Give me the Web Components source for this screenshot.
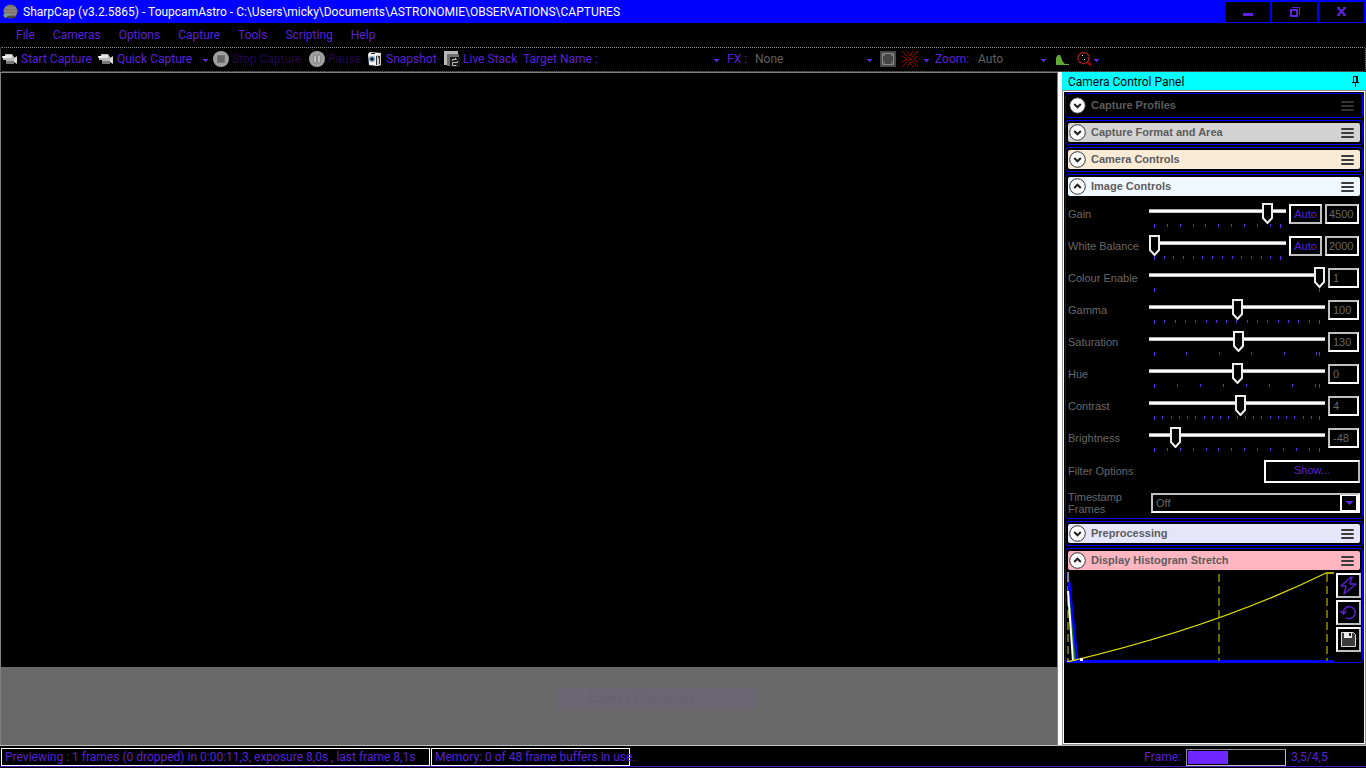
<!DOCTYPE html>
<html lang="en">
<head>
<meta charset="utf-8">
<title>SharpCap</title>
<style>
html, body { margin: 0; background: #000; }
body { font: 12px/16px Roboto, "Open Sans", sans-serif; color: #5a20d8; }
</style>
</head>
<body>
<cap-app></cap-app>
<script>
const TICK = '#6528f0';
function define(name, html, init) {
  const tpl = document.createElement('template');
  tpl.innerHTML = html;
  customElements.define(name, class extends HTMLElement {
    connectedCallback() {
      if (this.shadowRoot) return;
      this.attachShadow({ mode: 'open' }).append(tpl.content.cloneNode(true));
      if (init) init(this, this.shadowRoot);
    }
  });
}

/* Icons by name: width, height, shapes */
const ICONS = {
  camcorder: [16, 16, '<path d="M0 5h3V3h7l2 3v6H4V9H1V7H0z" fill="#b9b9b9"/><path d="M4 4h6v3H4z" fill="#e6e6e6"/><path d="M4 10h8v3H4z" fill="#777"/><path d="M12 7l3-2v8l-3-2z" fill="#d8d8d8"/><path d="M1 5h3v2H1z" fill="#fff"/>'],
  stop: [16, 16, '<circle cx="8" cy="8" r="8" fill="#a0a0a0"/><rect x="4" y="4" width="8" height="8" fill="#777"/><rect x="5" y="5" width="6" height="6" fill="#686868"/>'],
  pause: [16, 16, '<circle cx="8" cy="8" r="8" fill="#a0a0a0"/><path d="M5 4h2v8H5zM9 4h2v8H9z" fill="#f0f0f0" stroke="#666" stroke-width=".7"/>'],
  photo: [16, 16, '<path d="M1 3l2-2 11 1v12l-4 1-8-1z" fill="#f2f2f2"/><path d="M9 4l5-1v11l-5 1z" fill="#cfcfcf"/><path d="M9 5h1v9H9zM11 5h2v8h-1V7h-1z" fill="#333"/><circle cx="5" cy="8" r="3" fill="#6f9dc8"/><circle cx="5" cy="8" r="1.600" fill="#111"/><path d="M4 2h4v1H4z" fill="#222"/>'],
  stack: [16, 16, '<path d="M0 0h14v3H3v11H0z" fill="#b8b8b8"/><path d="M3 3h12v3H6v9H3z" fill="#6e6e6e"/><path d="M6 6h10v10H6z" fill="#1c1c1c"/><path d="M8.500 10V8.500h4l-1.500-1.500M13.500 10v1.500h-5v3h4" fill="none" stroke="#bbb"/>'],
  area: [16, 16, '<path d="M0 0h16v16H0z" fill="#484848"/><path d="M2.500 2.500h11v11h-11z" fill="#444" stroke="#8c8c8c"/><path d="M2.500 4.500h2v-2M11.500 2.500v2h2M2.500 11.500h2v2M11.500 13.500v-2h2" fill="none" stroke="#808080"/>'],
  reticle: [16, 16, '<path d="M0 0l16 16M16 0L0 16M5 0l3 5 3-5M5 16l3-5 3 5M0 5l5 3-5 3M16 5l-5 3 5 3" fill="none" stroke="#b80000" stroke-width=".8"/>'],
  histo: [13, 16, '<path d="M0 14V7l1-2 1-1h2l1 2 1 3 1 2 2 2h4v1z" fill="#62a832"/>'],
  magnify: [15, 16, '<circle cx="6.500" cy="7" r="5.500" fill="none" stroke="#a02020" stroke-width="1.500" stroke-dasharray="3 .6"/><path d="M10.500 11l3.500 3.500" stroke="#900" stroke-width="2.500"/><path d="M5 4h1v1H5zM7 8h1v1H7z" fill="#fff"/>'],
  caret: [5, 16, '<path d="M0 8h5v1H4v1H3v1H2v-1H1V9H0z" fill="#5f28e8"/>'],
  drop: [7, 4, '<path d="M0 0h7v1H6v1H5v1H4v1H3V3H2V2H1V1H0z" fill="#5f28e8"/>'],
  planet: [16, 16, '<circle cx="8.500" cy="7.500" r="7" fill="#77726f"/><path d="M3 4h11M2 7h13M3 10h11" stroke="#8d8885" stroke-width="1.500"/><path d="M4 13h9" stroke="#494643" stroke-width="2"/><path d="M1 11l5-2 2 2-5 3z" fill="#6fa08c"/>'],
  min: [16, 16, '<path d="M3 9h10v3H3z" fill="#5e22e0"/>'],
  max: [16, 16, '<path d="M4 6h6v6H4z" fill="none" stroke="#5e22e0" stroke-width="2"/><path d="M5 3.500h7.500V11" fill="none" stroke="#5e22e0"/>'],
  close: [16, 16, '<path d="M4 4l7 7M11 4l-7 7" stroke="#5e22e0" stroke-width="2"/><path d="M3 3.500h3M9 3.500h3M3 11.500h3M9 11.500h3" stroke="#5e22e0"/>'],
  pin: [9, 12, '<path d="M2.500 7V1.500h4V7M1 7.500h7M4.500 8v4" fill="none" stroke="#000"/><path d="M5 1h2v6H5z"/>'],
  bars: [13, 12, '<path d="M1 2h11M1 6h11M1 10h11" stroke="currentColor" stroke-width="2" stroke-linecap="round"/>'],
  down: [17, 17, '<circle cx="8.500" cy="8.500" r="7.800" fill="#fff" stroke="#333"/><path d="M5.200 7l3.300 3.300L11.800 7" fill="none" stroke="#222" stroke-width="2"/>'],
  up: [17, 17, '<circle cx="8.500" cy="8.500" r="7.800" fill="#fff" stroke="#333"/><path d="M5.200 10l3.300-3.300L11.800 10" fill="none" stroke="#222" stroke-width="2"/>'],
  bolt: [19, 19, '<path d="M12 1L2 10h5l-2 8L17 8h-6l2-7z" fill="none" stroke="#5420c8" stroke-width="1.500" stroke-linejoin="round"/>'],
  reset: [19, 19, '<path d="M4.300 10.500A6 6 0 1 1 7 14.700M1.500 8l3 3 3-3" fill="none" stroke="#5420c8" stroke-width="1.600"/>'],
  save: [19, 19, '<path d="M2.500 2.500h12l2 2v12h-14z" fill="#3c3c3c" stroke="#ddd"/><path d="M5 2h8v6H5z" fill="#eee"/><path d="M10 3h2v3h-2z" fill="#222"/>']
};
customElements.define('cap-icon', class extends HTMLElement {
  static observedAttributes = ['name'];
  constructor() { super(); this.attachShadow({ mode: 'open' }); }
  attributeChangedCallback(attr, old, name) {
    const [w, h, d] = ICONS[name];
    this.shadowRoot.innerHTML = `<style>:host{display:block;flex:none}svg{display:block}</style><svg width="${w}" height="${h}" viewBox="0 0 ${w} ${h}" aria-hidden="true">${d}</svg>`;
  }
});

define('title-bar', `<style>
:host{display:flex;align-items:center;height:23px;background:#00f;color:#fff;padding:0 2px;gap:5px}
h1{font:inherit;margin:0;flex:1;white-space:nowrap}
div{display:flex;gap:2px}
button{width:45px;height:20px;margin:0;padding:0;border:0;background:#000;display:flex;align-items:center;justify-content:center}
</style><cap-icon name="planet"></cap-icon><h1><slot></slot></h1>
<div><button aria-label="Minimize"><cap-icon name="min"></cap-icon></button><button aria-label="Restore"><cap-icon name="max"></cap-icon></button><button aria-label="Close"><cap-icon name="close"></cap-icon></button></div>`);

define('menu-item', `<style>:host{display:block}button{font:inherit;color:inherit;background:none;border:0;margin:0;padding:0;white-space:nowrap}</style><button><slot></slot></button>`);
define('menu-bar', `<style>:host{display:flex;align-items:center;height:24px;padding:0 16px;gap:18px}</style><slot></slot>`);

define('tool-button', `<style>
:host{display:block;flex:none;width:var(--w)}
:host([disabled]){color:#22064e}
button{display:flex;align-items:center;gap:3px;font:inherit;color:inherit;background:none;border:0;margin:0;padding:0;height:16px;white-space:nowrap}
</style><button><cap-icon></cap-icon><span><slot></slot></span></button>`, (el, root) => {
  root.querySelector('cap-icon').setAttribute('name', el.getAttribute('icon'));
  const b = root.querySelector('button');
  if (el.hasAttribute('disabled')) b.disabled = true;
  if (el.title) b.setAttribute('aria-label', el.title);
});

define('tool-bar', `<style>
:host{display:flex;align-items:center;height:22px;border:1px dotted #8a8a8a;padding:0 1px 1px;border-radius:2px}
label{flex:none;white-space:nowrap}
select,input{font:inherit;color:#606060;background:none;border:0;margin:0;padding:0;appearance:none;outline:0;height:16px}
input{width:114px}
.target{width:77px}.fxl{width:28px;margin-left:8px}.zl{width:43px}
.fx{width:112px}.zoom{width:63px}
</style>
<tool-button icon="camcorder" style="--w:96px">Start Capture</tool-button>
<tool-button icon="camcorder" style="--w:105px">Quick Capture</tool-button>
<tool-button icon="caret" title="Quick capture options" style="--w:10px"></tool-button>
<tool-button icon="stop" disabled style="--w:96px">Stop Capture</tool-button>
<tool-button icon="pause" disabled style="--w:58px">Pause</tool-button>
<tool-button icon="photo" style="--w:77px">Snapshot</tool-button>
<tool-button icon="stack" style="--w:79px">Live Stack</tool-button>
<label class="target" for="t">Target Name :</label><input id="t"><cap-icon name="caret"></cap-icon>
<label class="fxl" for="fx">FX :</label><select id="fx" class="fx"><option>None</option></select><tool-button icon="caret" title="Open FX list" style="--w:13px"></tool-button>
<tool-button icon="area" title="Selection area" style="--w:22px"></tool-button>
<tool-button icon="reticle" title="Reticle" style="--w:22px"></tool-button>
<tool-button icon="caret" title="Reticle options" style="--w:11px"></tool-button>
<label class="zl" for="z">Zoom:</label><select id="z" class="zoom"><option>Auto</option></select><tool-button icon="caret" title="Open zoom list" style="--w:15px"></tool-button>
<tool-button icon="histo" title="Histogram" style="--w:21px"></tool-button>
<tool-button icon="magnify" title="Focus score" style="--w:17px"></tool-button>
<tool-button icon="caret" title="Focus options" style="--w:10px"></tool-button>`);

define('preview-pane', `<style>
:host{display:flex;flex-direction:column;min-width:0;background:#696969;border:1px solid #808080;border-bottom:0}
.frame{aspect-ratio:16/9;background:#000}
.rest{flex:1;display:flex;align-items:flex-start;padding:21px 0 0 calc(50% + 28px)}
.ghost{width:166px;height:22px;line-height:22px;padding-left:32px;background:#6b6673;color:#66616b}
</style><div class="frame" role="img" aria-label="Camera preview"></div><div class="rest"><div class="ghost">Capture Plein écran</div></div>`);

define('panel-section', `<style>
:host{display:block;border:1px solid #00f;border-radius:3px;--bar:#000}
header{display:flex;align-items:center;height:19px;margin:2px;padding:0 6px 0 1px;background:var(--bar);border-radius:2px;color:#3c3c3c}
:host([dim]) header{color:#333}
h2{font:bold 11px/18px "Liberation Sans",sans-serif;height:19px;color:#5c5c5c;margin:0 0 0 5px;flex:1;white-space:nowrap}
button{background:none;border:0;padding:0;margin:0;color:inherit}
.menu{padding-top:1px}
</style><header><button class="toggle"><cap-icon></cap-icon></button><h2></h2><button class="menu" aria-label="Section menu"><cap-icon name="bars"></cap-icon></button></header><slot></slot>`, (el, root) => {
  root.querySelector('.toggle cap-icon').setAttribute('name', el.hasAttribute('open') ? 'up' : 'down');
  root.querySelector('.toggle').setAttribute('aria-label', 'Toggle ' + el.getAttribute('heading'));
  root.querySelector('h2').textContent = el.getAttribute('heading');
});

define('slider-row', `<style>
:host{display:flex;align-items:flex-start;height:32px;padding:0 3px 0 2px;box-sizing:border-box;color:#686868}
label{width:81px;flex:none;line-height:20px;white-space:nowrap}
.track{flex:1;min-width:0;margin:-1px 3px 0 0}
input[type=range]{appearance:none;display:block;width:100%;height:21px;margin:0;background:linear-gradient(#a8a8a8 1px,#fff 1px,#fff 3px,#c8c8c8 3px) 0 6px/100% 4px no-repeat}
input[type=range]::-webkit-slider-thumb{appearance:none;width:11px;height:21px;background:url("data:image/svg+xml,%3Csvg xmlns='http://www.w3.org/2000/svg' width='11' height='21'%3E%3Cpath d='M1 1h9v14l-4.500 5L1 15z' fill='%23000' stroke='%23eee' stroke-width='2'/%3E%3C/svg%3E")}
svg{display:block;width:100%;height:4px}
.auto,.value{box-sizing:border-box;height:20px;margin:0;font:inherit;background:#000;border:2px solid #fff;border-top-color:#c0c0c0;border-left-color:#c0c0c0}
.auto{width:33px;padding:0;margin-right:3px;border-color:#fff #c0c0c0 #c0c0c0 #fff;color:#5a20d8}
.value{width:31px;color:#686868;padding:0 0 0 3px}
:host([auto]) .value{width:34px;padding:0 0 0 2px}
</style><label for="r"></label><div class="track"><input type="range" id="r"><svg shape-rendering="crispEdges"></svg></div><input class="value" type="text">`, (el, root) => {
  const r = root.querySelector('#r'), v = root.querySelector('.value'), name = el.getAttribute('label');
  root.querySelector('label').textContent = name;
  r.min = el.getAttribute('min'); r.max = el.getAttribute('max'); r.value = el.getAttribute('value');
  v.value = el.getAttribute('value');
  v.setAttribute('aria-label', name + ' value');
  if (el.hasAttribute('auto')) {
    const b = document.createElement('button');
    b.className = 'auto'; b.textContent = 'Auto'; v.before(b);
  }
  /* tick marks: one every `step` along the track, plus one at the end */
  const svg = root.querySelector('svg');
  svg.setAttribute('fill', TICK);
  new ResizeObserver(() => {
    const end = svg.getBoundingClientRect().width - 11, step = Number(el.getAttribute('step'));
    let s = '';
    for (let x = 0; x < end - 2; x += step) s += `<rect x="${Math.round(x) + 5}" width="1" height="${x ? 3 : 4}"/>`;
    svg.innerHTML = s + `<rect x="${Math.round(end) + 5}" width="1" height="4"/>`;
  }).observe(svg);
});

define('image-controls', `<style>
:host{display:block;font:11px/12px "Liberation Sans",sans-serif;color:#686868;padding:6px 0 3px}
.row{display:flex;align-items:center;padding:0 2px}
.row label,.row span{width:83px;flex:none}
.filter{justify-content:space-between;height:23px;margin:0 0 8px}
.filter span{padding-bottom:2px}
button{width:96px;height:23px;box-sizing:border-box;margin:0;padding:0 0 3px;font:inherit;color:#5a20d8;background:#000;border:2px solid #fff;border-right-color:#b8b8b8}
.pick{flex:1;display:flex;height:20px;box-sizing:border-box;border:2px solid #fff;border-top-color:#c0c0c0;border-left-color:#c0c0c0}
select{flex:1;appearance:none;font:inherit;color:#686868;background:#000;border:0;padding:0 3px;margin:0}
.drop{box-sizing:border-box;width:18px;border:2px solid #fff;border-width:1px 2px 1px 2px;display:flex;align-items:center;justify-content:center}
</style>
<slider-row label="Gain" min="100" max="5000" value="4500" step="12.860" auto></slider-row>
<slider-row label="White Balance" min="2000" max="15000" value="2000" step="9.690" auto></slider-row>
<slider-row label="Colour Enable" min="0" max="1" value="1" step="165"></slider-row>
<slider-row label="Gamma" min="20" max="180" value="100" step="10.310"></slider-row>
<slider-row label="Saturation" min="0" max="255" value="130" step="32.400"></slider-row>
<slider-row label="Hue" min="-180" max="180" value="0" step="23"></slider-row>
<slider-row label="Contrast" min="-100" max="100" value="4" step="8.250"></slider-row>
<slider-row label="Brightness" min="-64" max="64" value="-48" step="12.890"></slider-row>
<div class="row filter"><span>Filter Options</span><button>Show...</button></div>
<div class="row"><label for="ts">Timestamp<br>Frames</label><div class="pick"><select id="ts"><option>Off</option></select><div class="drop"><cap-icon name="drop"></cap-icon></div></div></div>`);

define('histogram-stretch', `<style>
:host{display:flex;height:91px;margin-top:-1px;overflow:hidden}
.plot{flex:1;min-width:0;height:91px;display:block}
.tools{display:flex;flex-direction:column;gap:2px;padding:2px 1px 0 0}
button{width:25px;height:25px;box-sizing:border-box;padding:1px;margin:0;background:#000;border:2px solid #fff;border-right-color:#c0c0c0;border-bottom-color:#c0c0c0}
</style>
<svg class="plot" viewBox="0 0 270 91" preserveAspectRatio="none">
<path d="M0 90h268" stroke="#00f" stroke-width="2"/>
<path d="M2 3v87M153 3v87M261 3v87" stroke="#6b6b00" stroke-width="2" stroke-dasharray="8 4"/>
<path d="M2 3L11 90" stroke="#00f" stroke-width="3"/><path d="M2 20L9 90" stroke="#0a7a1a" stroke-width="2"/><path d="M2 20L7 90" stroke="#fff" stroke-width="2"/>
<path d="M2 1v10" stroke="#888" stroke-width="2"/>
<path d="M1 91Q150 56 260 2H268" fill="none" stroke="#e0e000" stroke-width="1.300"/>
<path d="M14 87h3v3h-3z" fill="#fff"/>
</svg>
<div class="tools"><button aria-label="Auto stretch"><cap-icon name="bolt"></cap-icon></button><button aria-label="Reset stretch"><cap-icon name="reset"></cap-icon></button><button aria-label="Save stretch"><cap-icon name="save"></cap-icon></button></div>`);

define('control-panel', `<style>
:host{display:flex;flex-direction:column;min-width:0}
.head{display:flex;align-items:center;justify-content:space-between;height:18px;background:#0ff;color:#000;padding:0 6px}
h2{font:inherit;line-height:18px;margin:0;padding-top:2px}
.head button{background:none;border:0;padding:0;margin:0}
.body{flex:1;display:flex;flex-direction:column;gap:2px;padding:1px;border:1px solid #fff;outline:1px solid #909090;margin:1px}
</style>
<div class="head"><h2>Camera Control Panel</h2><button aria-label="Pin panel"><cap-icon name="pin"></cap-icon></button></div>
<div class="body">
<panel-section heading="Capture Profiles" dim></panel-section>
<panel-section heading="Capture Format and Area" style="--bar:#d3d3d3"></panel-section>
<panel-section heading="Camera Controls" style="--bar:#faebd7"></panel-section>
<panel-section heading="Image Controls" open style="--bar:#f0f8ff"><image-controls></image-controls></panel-section>
<panel-section heading="Preprocessing" style="--bar:#e6e6fa"></panel-section>
<panel-section heading="Display Histogram Stretch" open style="--bar:#ffb6c1"><histogram-stretch></histogram-stretch></panel-section>
</div>`);

define('status-bar', `<style>
:host{display:flex;align-items:center;height:18px;padding:2px 40px 0 1px;gap:1px;border-bottom:1px solid #4a1ab8;margin-bottom:1px}
.box{box-sizing:border-box;height:18px;border:1px solid #fff;padding:0 3px;white-space:nowrap}
.one{width:429px}.two{width:199px}
.end{margin-left:auto;display:flex;align-items:center;gap:5px}
.count{width:35px;white-space:nowrap}
.meter{box-sizing:border-box;width:100px;height:17px;border:1px solid #c0c0c0;border-top-color:#909090;border-left-color:#909090;padding:1px}
.fill{width:42%;height:100%;background:#6f27ff}
</style><div class="box one">Previewing : 1 frames (0 dropped) in 0:00:11,3, exposure 8,0s , last frame 8,1s</div>
<div class="box two">Memory: 0 of 48 frame buffers in use.</div>
<div class="end"><span>Frame:</span><div class="meter" role="progressbar" aria-label="Frame" aria-valuenow="42"><div class="fill"></div></div><span class="count">3,5/4,5</span></div>`);

define('cap-app', `<style>
:host{display:flex;flex-direction:column;min-height:100vh}
main{flex:1;display:grid;grid-template-columns:minmax(0,1fr) 4px 304px;border-bottom:1px solid #c0c0c0}
.split{background:#fff}
</style>
<title-bar>SharpCap (v3.2.5865) - ToupcamAstro - C:\\Users\\micky\\Documents\\ASTRONOMIE\\OBSERVATIONS\\CAPTURES</title-bar>
<menu-bar><menu-item>File</menu-item><menu-item>Cameras</menu-item><menu-item>Options</menu-item><menu-item>Capture</menu-item><menu-item>Tools</menu-item><menu-item>Scripting</menu-item><menu-item>Help</menu-item></menu-bar>
<tool-bar></tool-bar>
<main><preview-pane></preview-pane><div class="split"></div><control-panel></control-panel></main>
<status-bar></status-bar>`);
</script>
</body>
</html>
